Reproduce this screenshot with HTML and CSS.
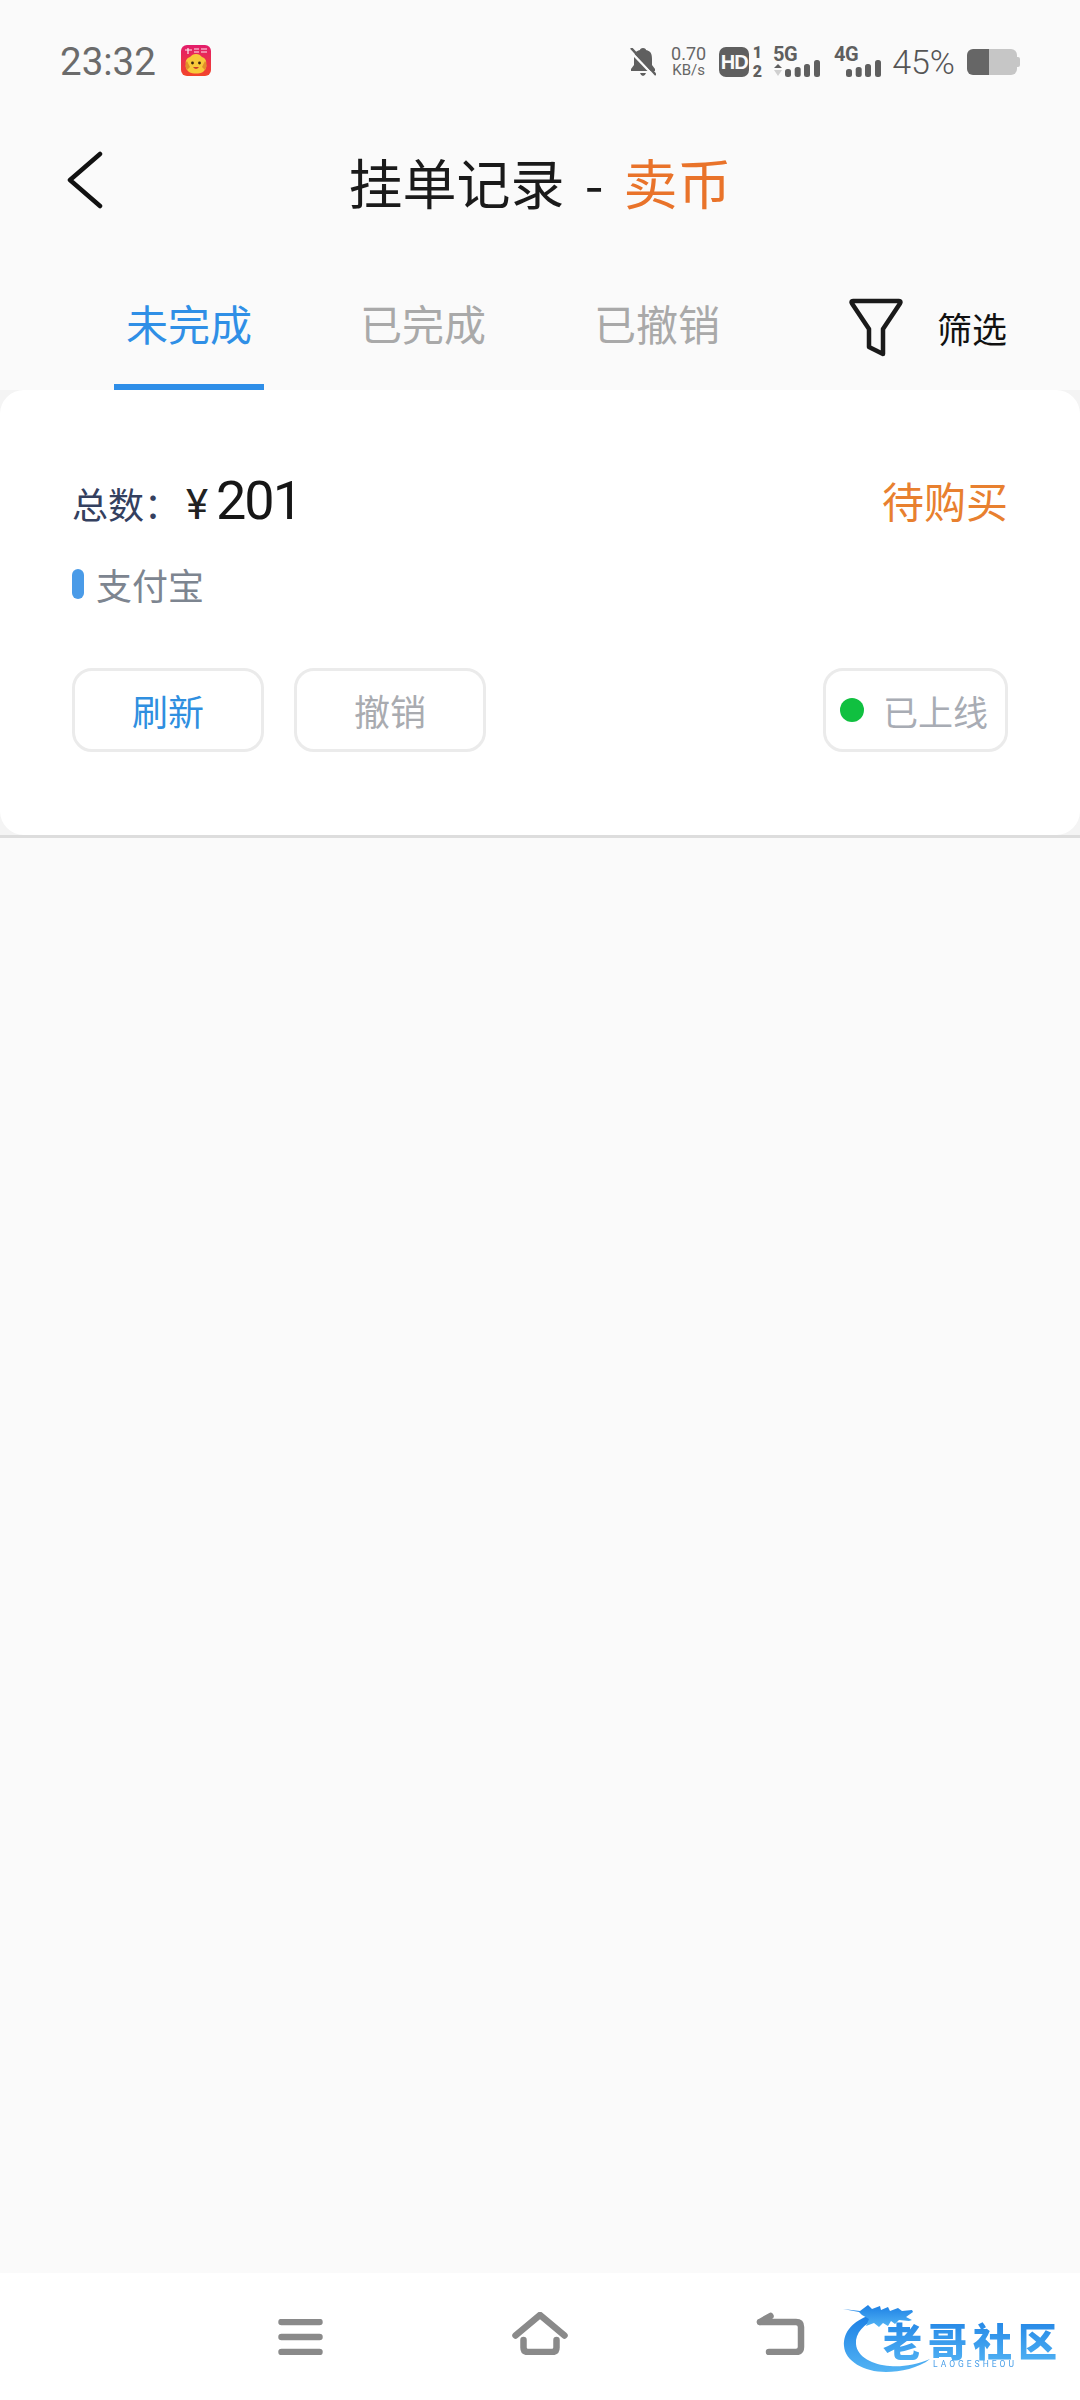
FILE: index.html
```html
<!DOCTYPE html>
<html lang="zh">
<head>
<meta charset="utf-8">
<title>挂单记录 - 卖币</title>
<link rel="stylesheet" href="styles.css">
</head>
<body>
<div class="page">
  <header class="status">
    <div class="status-left">
      <span class="time">23:32</span>
      <svg class="appicon" viewBox="0 0 30 31">
        <defs><linearGradient id="ai" x1="0" y1="0" x2="0" y2="1"><stop offset="0" stop-color="#e31c6c"/><stop offset="1" stop-color="#f2452a"/></linearGradient></defs>
        <rect width="30" height="31" rx="6" fill="url(#ai)"/>
        <path class="ai-lines" d="M4 5h7M7 3v6M13 4h5M13 7h5M20 4h6M20 7h6"/>
        <path d="M15 9c3 0 4 1 6 3 3 1 5 4 4 7 1 4-1 6-3 8-4 2-10 2-14 0-2-2-4-4-3-8-1-3 1-6 4-7 2-2 3-3 6-3z" fill="#f8c93a"/>
        <path d="M6 16c-2 2-2 6 0 9l3-3zM24 16c2 2 2 6 0 9l-3-3z" fill="#e0902a"/>
        <circle cx="11.500" cy="18" r="1.400" fill="#3a2510"/><circle cx="18.500" cy="18" r="1.400" fill="#3a2510"/>
        <path d="M12 22q3 4 6 0z" fill="#c9402a"/>
      </svg>
    </div>
    <div class="status-right">
      <svg class="i-bell" viewBox="0 0 26 28">
        <path class="dark" d="M13 0c2 0 3 1 3 2 5 1 6 4 6 9v6l3 4v2H1v-2l3-4v-6c0-5 1-8 6-9 0-1 1-2 3-2zM10 25h6q-1 3-3 3t-3-3z"/>
        <path class="bell-slash-bg" d="M0 3l24 25"/>
        <path class="bell-slash" d="M1 0l25 27"/>
      </svg>
      <div class="speed"><span>0.70</span><span class="speed-unit">KB/s</span></div>
      <div class="hd"><span class="hd-box">HD</span><span class="hd-nums"><b>1</b><b>2</b></span></div>
      <svg class="signal" viewBox="0 0 48 30">
        <text class="sig-label" x="0" y="14">5G</text>
        <path class="dark" d="M5 17l4 4H1z"/><path class="light" d="M5 29l4-6H1z"/>
        <rect class="dark" x="12" y="22" width="6" height="8" rx="2.500"/><rect class="dark" x="21.700" y="20" width="6" height="10" rx="2.500"/><rect class="dark" x="31" y="17" width="6" height="13" rx="2.500"/><rect class="dark" x="41" y="13" width="6" height="17" rx="2.500"/>
      </svg>
      <svg class="signal signal-4g" viewBox="0 0 48 30">
        <text class="sig-label" x="0" y="14">4G</text>
        <rect class="dark" x="12" y="22" width="6" height="8" rx="2.500"/><rect class="dark" x="21.700" y="20" width="6" height="10" rx="2.500"/><rect class="dark" x="31" y="17" width="6" height="13" rx="2.500"/><rect class="dark" x="41" y="13" width="6" height="17" rx="2.500"/>
      </svg>
      <span class="percent">45%</span>
      <div class="battery"><span class="battery-fill"></span><span class="battery-rest"></span><span class="battery-tip"></span></div>
    </div>
  </header>

  <nav class="titlebar">
    <svg class="back" viewBox="0 0 36 58"><path d="M33 3L3 29l30 26"/></svg>
    <h1 class="title">挂单记录<span class="title-dash"> - </span><span class="title-accent">卖币</span></h1>
    <span class="title-spacer"></span>
  </nav>

  <div class="tabs">
    <div class="tab tab-active"><span>未完成</span><i class="tab-bar"></i></div>
    <div class="tab"><span>已完成</span></div>
    <div class="tab"><span>已撤销</span></div>
    <div class="filter">
      <svg class="filter-icon" viewBox="0 0 56 60"><path d="M5 3h46c1.500 0 2 1 1 2.500L35 31v25L21 49V31L4 5.500C3 4 3.500 3 5 3z"/></svg>
      <span>筛选</span>
    </div>
  </div>

  <section class="card-wrap">
    <div class="card">
      <div class="row-total">
        <div class="total">
          <span class="total-label">总数：</span><span class="yen">¥</span><span class="amount">201</span>
        </div>
        <span class="state">待购买</span>
      </div>
      <div class="row-pay"><i class="pay-mark"></i><span>支付宝</span></div>
      <div class="row-actions">
        <button class="btn btn-blue">刷新</button>
        <button class="btn">撤销</button>
        <div class="online"><i class="online-dot"></i><span>已上线</span></div>
      </div>
    </div>
  </section>

  <div class="spacer"></div>

  <footer class="softkeys">
    <svg class="key-menu" viewBox="0 0 45 36"><path d="M3.500 3h38M3.500 18h38M3.500 33h38"/></svg>
    <svg class="key-home" viewBox="0 0 56 43"><path d="M3.500 23.500L28 3 52.500 23.500"/><path d="M11.500 28v7.500q0 4.500 4.500 4.500h24q4.500 0 4.500-4.500V28"/></svg>
    <svg class="key-back" viewBox="0 0 49 43"><path d="M4 10L14.500 4M4 10H40q5 0 5 5v20q0 5-5 5H13"/></svg>
    <svg class="watermark" viewBox="0 0 260 110">
      <defs>
        <linearGradient id="wm" x1="0" y1="0" x2="0" y2="1"><stop offset="0" stop-color="#1c7fe4"/><stop offset="1" stop-color="#53b4f4"/></linearGradient>
      </defs>
      <path class="wm-shape" d="M50 35C33 41 23 52 24 66c1 15 20 26 42 26 14 0 33-4 44-13-14 6-28 8-40 7-17-1-33-9-34-22-1-11 8-20 21-26z"/>
      <path class="wm-shape" d="M23 29l17 2 8-6 4 4 8-3 1 4 7-3 2 4 8-3 4 3 10-1 1 2-7 5 6 3-3 1-10-1-4 4-4-3-3 5-5-3-4 4-5-4-8 3 3-7-7-4-3-3z"/>
      <text class="wm-cn" x="63" y="76">老哥社区</text>
      <text class="wm-en" x="113" y="87">LAOGESHEOU</text>
    </svg>
  </footer>
</div>
</body>
</html>
```
FILE: styles.css
```css
* { box-sizing: border-box; }
html, body { margin: 0; padding: 0; }
body {
  width: 1080px;
  height: 2400px;
  background: #fafafa;
  font-family: "Noto Sans CJK SC", Roboto, sans-serif;
  overflow: hidden;
}
.page { display: flex; flex-direction: column; width: 1080px; height: 2400px; }

/* status bar */
.status { display: flex; justify-content: space-between; align-items: center; height: 124px; padding: 0 60px 0 60px; color: #666; }
.status-left { display: flex; align-items: center; gap: 25px; }
.time { font: 38.500px/1 Roboto, sans-serif; color: #6b6b6b; }
.appicon { width: 30px; height: 31px; margin-top: -3px; }
.ai-lines { stroke: #fff; stroke-width: 1.200; fill: none; opacity: .9; }
.status-right { display: flex; align-items: center; height: 30px; }
.dark { fill: #5f5f5f; }
.light { fill: #d0d0d0; }
.i-bell { width: 26px; height: 28px; margin-right: 14px; }
.bell-slash { stroke: #5f5f5f; stroke-width: 2.500; }
.bell-slash-bg { stroke: #fafafa; stroke-width: 2.500; }
.speed { display: flex; flex-direction: column; width: 37px; margin-right: 12px; font: 18px/16px Roboto, sans-serif; color: #666; text-align: center; white-space: nowrap; align-items: center; }
.speed-unit { font-size: 15px; }
.hd { display: flex; align-items: center; width: 43px; margin-right: 11px; }
.hd-box { display: block; width: 30px; height: 30px; background: #5f5f5f; border-radius: 7px; color: #fafafa; font: 700 20px/30px "Liberation Sans", sans-serif; text-align: center; letter-spacing: -1px; }
.hd-nums { display: flex; flex-direction: column; width: 13px; font: 700 16px/19px Roboto, sans-serif; color: #5f5f5f; text-align: right; }
.hd-nums b { display: block; }
.signal { width: 48px; height: 30px; margin-right: 13px; overflow: visible; }
.signal-4g { margin-right: 10px; }
.sig-label { font: 700 20px Roboto, sans-serif; letter-spacing: -.5px; fill: #5f5f5f; }
.percent { font: 300 34px/1 Roboto, sans-serif; color: #555; margin-right: 12px; }
.battery { display: flex; align-items: center; width: 53px; height: 26px; }
.battery-fill { width: 22px; height: 26px; background: #666; border-radius: 6px 0 0 6px; }
.battery-rest { width: 28px; height: 26px; background: #c6c6c6; border-radius: 0 6px 6px 0; }
.battery-tip { width: 3px; height: 10px; background: #c6c6c6; border-radius: 0 2px 2px 0; }

/* title */
.titlebar { display: grid; grid-template-columns: 1fr auto 1fr; align-items: center; height: 116px; padding: 0 67px; }
.back { width: 36px; height: 58px; margin-bottom: 4px; fill: none; stroke: #111; stroke-width: 4.500; stroke-linecap: round; stroke-linejoin: round; }
.title { margin: 0; font-size: 54px; line-height: 70px; font-weight: 400; color: #1a1a1a; white-space: pre; }
.title-dash { margin: 0 8px; }
.title-accent { color: #e9732a; }

/* tabs */
.tabs { position: relative; display: flex; align-items: flex-start; height: 150px; padding: 0 73px 0 72px; }
.tab { position: relative; display: flex; justify-content: center; width: 234px; padding-top: 55px; font-size: 42px; line-height: 56px; color: #a9a9a9; }
.tab-active { color: #2f8fe6; }
.tab-bar { position: absolute; top: 144px; left: 42px; width: 150px; height: 6px; background: #2e8ee8; }
.filter { display: flex; align-items: center; margin-left: auto; margin-top: 58px; gap: 33px; font-size: 35px; line-height: 60px; color: #111; }
.filter-icon { width: 56px; height: 60px; fill: none; stroke: #1a1a1a; stroke-width: 4.500; stroke-linejoin: round; }

/* card */
.card-wrap { background: #f4f4f4; border-bottom: 3px solid #ddd; }
.card { height: 445px; padding: 80px 72px 0 72px; background: #fff; border-radius: 24px; }
.row-total { display: flex; justify-content: space-between; align-items: center; height: 60px; }
.total { display: flex; align-items: baseline; margin-top: 5px; }
.total-label { width: 114px; font-size: 36px; line-height: 50px; color: #34405f; }
.yen { width: 30px; font: 42px/50px Roboto, sans-serif; color: #222; }
.amount { font: 54px/50px Roboto, sans-serif; color: #161616; letter-spacing: -2px; }
.state { font-size: 42px; line-height: 60px; color: #e8802f; }
.row-pay { display: flex; align-items: center; gap: 12px; height: 58px; margin-top: 25px; font-size: 36px; color: #7d8590; }
.pay-mark { width: 12px; height: 30px; background: #4a9be8; border-radius: 6px; }
.row-actions { display: flex; gap: 30px; height: 84px; margin-top: 55px; }
.btn { width: 192px; height: 84px; padding: 0; background: #fff; border: 3px solid #ebebeb; border-radius: 20px; font: 36px "Noto Sans CJK SC", sans-serif; color: #a9abb0; }
.btn-blue { color: #2f8fe0; }
.online { display: flex; align-items: center; gap: 19px; width: 185px; height: 84px; margin-left: auto; padding-left: 14px; border: 3px solid #ebebeb; border-radius: 20px; font-size: 35px; color: #a8acb4; }
.online-dot { width: 24px; height: 24px; border-radius: 50%; background: #10c040; }

.spacer { flex: 1; }

/* soft keys */
.softkeys { position: relative; display: flex; align-items: flex-start; height: 127px; padding: 39px 0 0 278px; background: #fff; }
.softkeys svg { fill: none; stroke: #8a8a8a; stroke-width: 6.500; stroke-linecap: round; stroke-linejoin: round; }
.key-menu { width: 45px; height: 36px; margin-top: 7px; }
.key-home { width: 56px; height: 43px; margin-left: 189px; }
.key-back { width: 49px; height: 43px; margin-left: 188px; }
.softkeys .watermark { position: absolute; left: 820px; top: 7px; width: 260px; height: 110px; stroke: none; filter: blur(.6px); }
.wm-shape { fill: url(#wm); stroke: none; }
.wm-cn { font: 900 39px "Noto Sans CJK SC", sans-serif; letter-spacing: 6px; fill: url(#wm); stroke: none; }
.wm-en { font: 8.500px Roboto, sans-serif; letter-spacing: 3px; fill: #4a9fe8; stroke: none; }
```
